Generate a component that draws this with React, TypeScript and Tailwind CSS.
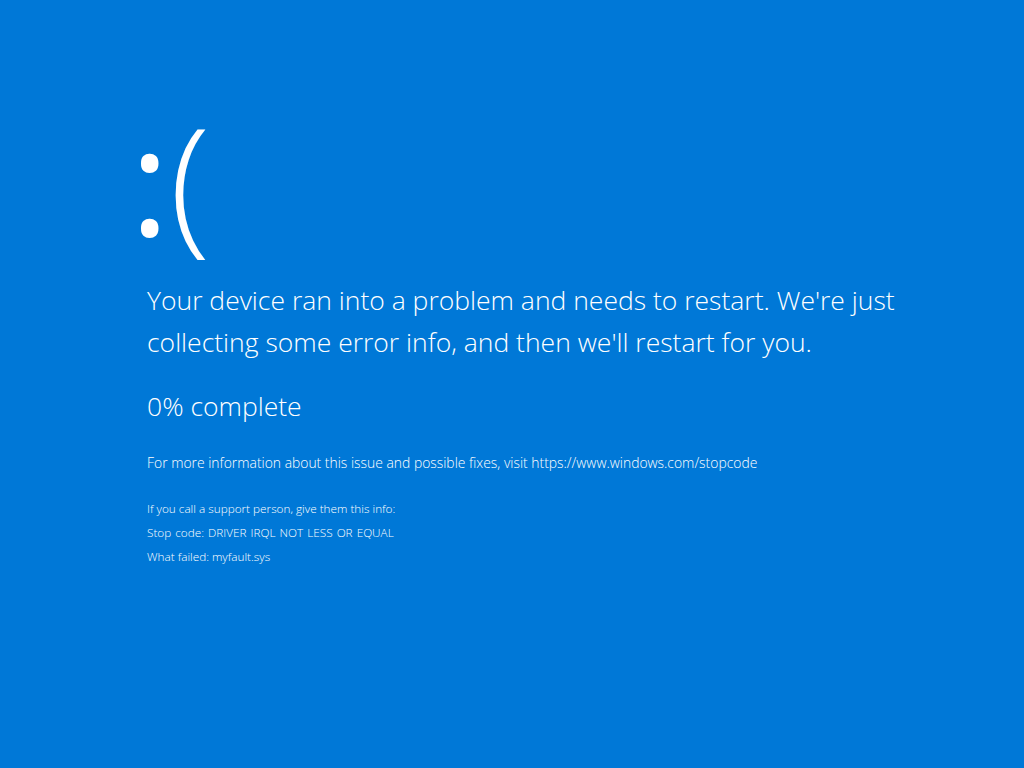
export default function App() {
  const font = { fontFamily: '"Open Sans", "Noto Sans", sans-serif' };
  return (
    <div className="w-[1024px] h-[768px] bg-[#0078d7] text-white overflow-hidden" style={font}>
      <div className="pl-[142px] pt-[83px]">
        <div className="flex items-start text-[150px] leading-[190px] h-[196px] ml-[-12px]">
          <span className="font-medium">:</span>
          <span className="font-light ml-[0px]">(</span>
        </div>
        <div className="pl-[5px]">
          <p className="text-[26.5px] leading-[42px] font-light w-[820px]">
            Your device ran into a problem and needs to restart. We're just collecting some error info, and then we'll restart for you.
          </p>
          <p className="text-[26.5px] leading-[42px] font-light mt-[22px]">0% complete</p>
          <p className="text-[13.9px] leading-[18px] font-light mt-[27px]">
            For more information about this issue and possible fixes, visit https://www.windows.com/stopcode
          </p>
          <div className="text-[11.75px] leading-[24px] font-light mt-[24px]">
            <p>If you call a support person, give them this info:</p>
            <p className="[word-spacing:1px]">Stop code: DRIVER IRQL NOT LESS OR EQUAL</p>
            <p>What failed: myfault.sys</p>
          </div>
        </div>
      </div>
    </div>
  );
}
